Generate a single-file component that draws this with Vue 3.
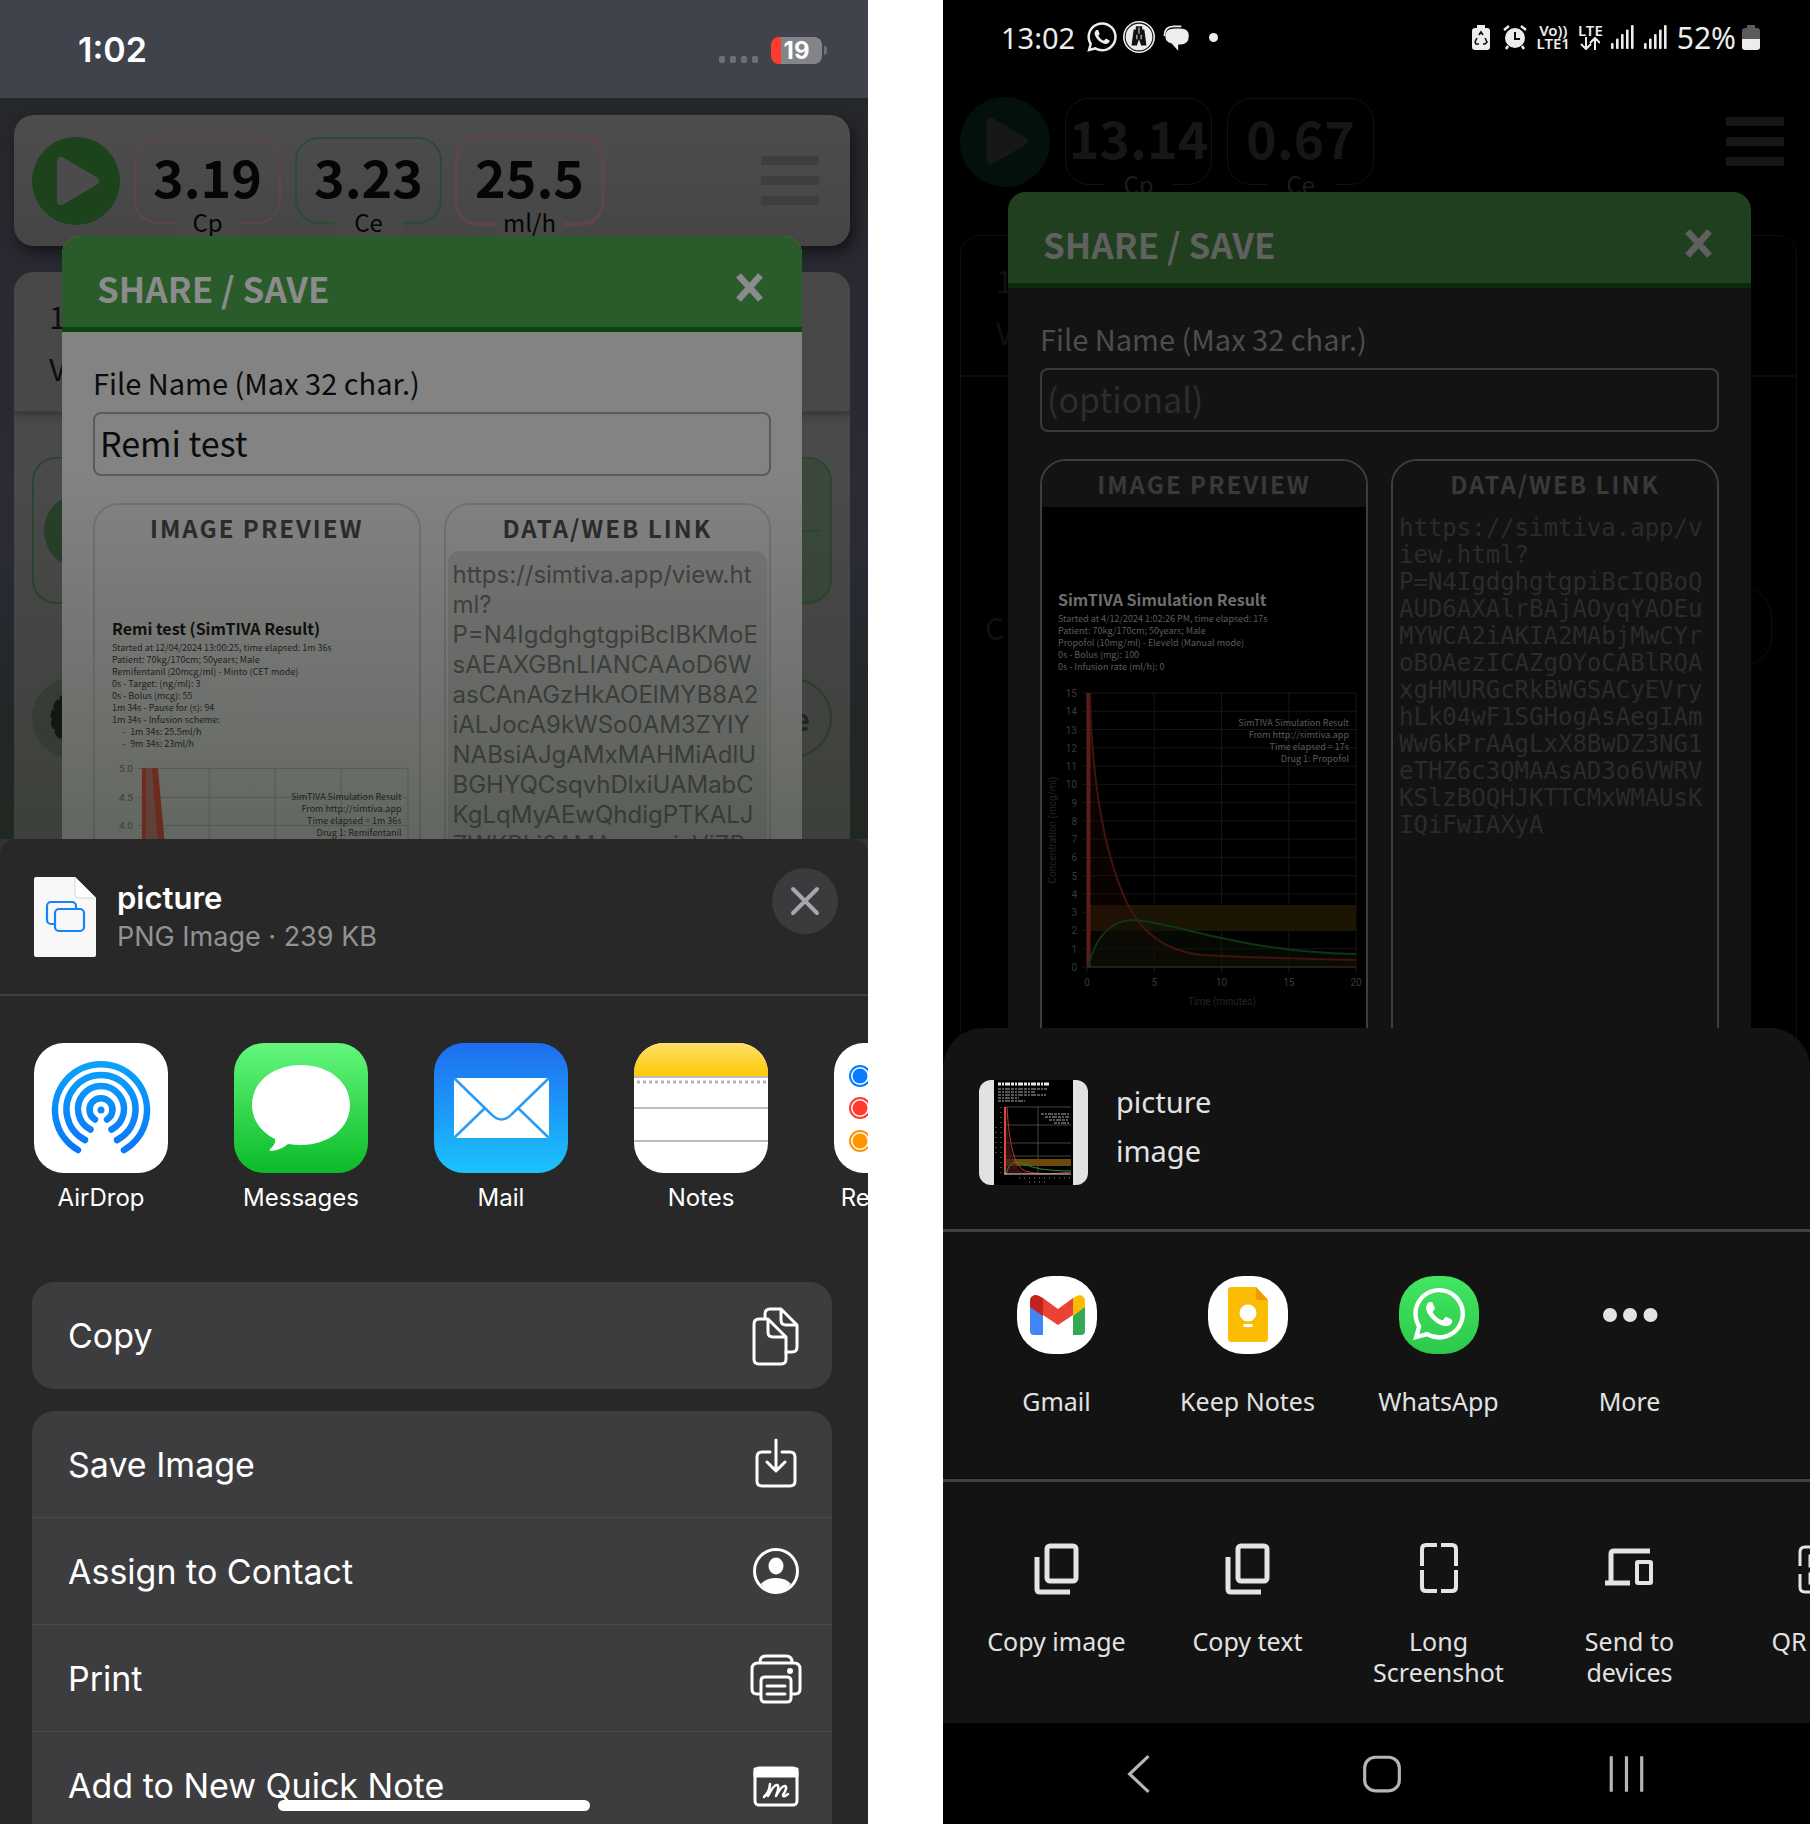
<script setup>
const readouts = {
  ios: [
    { value: '3.19', unit: 'Cp', tone: 'red' },
    { value: '3.23', unit: 'Ce', tone: 'green' },
    { value: '25.5', unit: 'ml/h', tone: 'rate' }
  ],
  android: [
    { value: '13.14', unit: 'Cp', tone: 'red' },
    { value: '0.67', unit: 'Ce', tone: 'green' }
  ]
}

const iosLink = [
  'https://simtiva.app/view.ht', 'ml?', 'P=N4IgdghgtgpiBcIBKMoE', 'sAEAXGBnLIANCAAoD6W',
  'asCAnAGzHkAOElMYB8A2', 'iALJocA9kWSo0AM3ZYIY', 'NABsiAJgAMxMAHMiAdlU',
  'BGHYQCsqvhDlxiUAMabC', 'KgLqMyAEwQhdigPTKALJ', 'ZWKRLi8AMAnmsaixViZR'
].join('\n')

const androidLink = [
  'https://simtiva.app/v', 'iew.html?', 'P=N4IgdghgtgpiBcIQBoQ', 'AUD6AXAlrBAjAOyqYAOEu',
  'MYWCA2iAKIA2MAbjMwCYr', 'oBOAezICAZgOYoCABlRQA', 'xgHMURGcRkBWGSACyEVry',
  'hLk04wF1SGHogAsAegIAm', 'Ww6kPrAAgLxX8BwDZ3NG1', 'eTHZ6c3QMAAsAD3o6VWRV',
  'KSlzBOQHJKTTCMxWMAUsK', 'IQiFwIAXyA'
].join('\n')

const iosLines = [
  'Started at 12/04/2024 13:00:25, time elapsed: 1m 36s',
  'Patient: 70kg/170cm; 50years; Male',
  'Remifentanil (20mcg/ml) - Minto (CET mode)',
  '0s - Target: (ng/ml): 3',
  '0s - Bolus (mcg): 55',
  '1m 34s - Pause for (s): 94',
  '1m 34s - Infusion scheme:'
]
const iosScheme = ['1m 34s: 25.5ml/h', '9m 34s: 23ml/h']
const iosLegend = ['SimTIVA Simulation Result', 'From http://simtiva.app', 'Time elapsed = 1m 36s', 'Drug 1: Remifentanil']

const androidLines = [
  'Started at 4/12/2024 1:02:26 PM, time elapsed: 17s',
  'Patient: 70kg/170cm; 50years; Male',
  'Propofol (10mg/ml) - Eleveld (Manual mode)',
  '0s - Bolus (mg): 100',
  '0s - Infusion rate (ml/h): 0'
]
const androidLegend = ['SimTIVA Simulation Result', 'From http://simtiva.app', 'Time elapsed = 17s', 'Drug 1: Propofol']

const units = Array.from({ length: 16 }, (_, i) => i)
const unitY = (v) => 284 - (v * 274) / 15
const minuteX = (m) => 45 + (m * 269) / 20

const bars = [0, 1, 2, 3, 4]

const whatsapp = 'M17.472 14.382c-.297-.149-1.758-.867-2.030-.967-.273-.099-.471-.148-.67.15-.197.297-.767.966-.94 1.164-.173.199-.347.223-.644.075-.297-.15-1.255-.463-2.390-1.475-.883-.788-1.480-1.761-1.653-2.059-.173-.297-.018-.458.13-.606.134-.133.298-.347.446-.52.149-.174.198-.298.298-.497.099-.198.05-.371-.025-.52-.075-.149-.669-1.612-.916-2.207-.242-.579-.487-.5-.669-.51-.173-.008-.371-.01-.57-.01-.198 0-.52.074-.792.372-.272.297-1.040 1.016-1.040 2.479 0 1.462 1.065 2.875 1.213 3.074.149.198 2.096 3.200 5.077 4.487.709.306 1.262.489 1.694.625.712.227 1.360.195 1.871.118.571-.085 1.758-.719 2.006-1.413.248-.694.248-1.289.173-1.413-.074-.124-.272-.198-.57-.347m-5.421 7.403h-.004a9.870 9.870 0 01-5.031-1.378l-.361-.214-3.741.982.998-3.648-.235-.374a9.860 9.860 0 01-1.510-5.260c.001-5.450 4.436-9.884 9.888-9.884 2.640 0 5.122 1.030 6.988 2.898a9.825 9.825 0 012.893 6.994c-.003 5.450-4.437 9.884-9.885 9.884m8.413-18.297A11.815 11.815 0 0012.050 0C5.495 0 .16 5.335.157 11.892c0 2.096.547 4.142 1.588 5.945L.057 24l6.305-1.654a11.882 11.882 0 005.683 1.448h.005c6.554 0 11.890-5.335 11.893-11.893a11.821 11.821 0 00-3.480-8.413Z'
</script>

<template>
  <main class="stage">
    <section class="phone ios">
      <header class="ios-status">
        <time>1:02</time>
        <span class="dots"><i v-for="n in 4" :key="n"></i></span>
        <span class="battery">19</span>
      </header>

      <div class="app">
        <div class="topbar">
          <button class="play" aria-label="Play">
            <svg viewBox="0 0 88 88"><path d="M29 24v40l34-20z" stroke-width="8" stroke-linejoin="round" /></svg>
          </button>
          <div v-for="r in readouts.ios" :key="r.unit" class="readout" :class="r.tone">
            <b>{{ r.value }}</b><span>{{ r.unit }}</span>
          </div>
          <button class="menu" aria-label="Menu"><i></i><i></i><i></i></button>
        </div>
        <div class="card">
          <div class="card-head"><p>1</p><p>V</p></div>
          <div class="drug"><i class="knob"></i><i class="tick"></i></div>
          <div class="tools">
            <span class="gear">
              <svg viewBox="0 0 80 80"><circle cx="48" cy="40" r="28" stroke-dasharray="8 3" stroke-width="3" /></svg>
            </span>
            <span class="pill">e</span>
          </div>
        </div>

        <div class="modal">
          <header>
            <h2>SHARE / SAVE</h2>
            <button aria-label="Close dialog"><svg viewBox="0 0 30 30"><path d="M5 4l20 22M25 4L5 26" /></svg></button>
          </header>
          <div class="body">
            <label for="name-ios">File Name (Max 32 char.)</label>
            <input id="name-ios" type="text" maxlength="32" value="Remi test">
            <div class="panels">
              <section class="panel">
                <h3>IMAGE PREVIEW</h3>
                <div class="result">
                  <h4>Remi test (SimTIVA Result)</h4>
                  <p v-for="l in iosLines" :key="l">{{ l }}</p>
                  <p v-for="l in iosScheme" :key="l" class="sub"><span>-</span>{{ l }}</p>
                </div>
                <svg class="chart" viewBox="0 0 324 120">
                  <g stroke="#6a6d69" stroke-width="1">
                    <path d="M42 10.500H313M42 39.500H313M42 67.500H313M42 96.500H313M114.500 10V120M180.500 10V120M246.500 10V120M313.500 10V120" />
                  </g>
                  <path d="M47 10H60L70 120H47z" fill="#7c4b45" />
                  <path d="M47 10H51V120H47zM57 10H63L73 120H66z" fill="#8c2c22" />
                  <g class="ticks" text-anchor="end">
                    <text x="38" y="14">5.0</text><text x="38" y="43">4.5</text><text x="38" y="71">4.0</text>
                  </g>
                  <g class="legend" text-anchor="end">
                    <text v-for="(l, i) in iosLegend" :key="l" x="307" :y="42 + i * 12">{{ l }}</text>
                  </g>
                </svg>
              </section>
              <section class="panel">
                <h3><label for="link-ios">DATA/WEB LINK</label></h3>
                <textarea id="link-ios" readonly :value="iosLink"></textarea>
              </section>
            </div>
          </div>
        </div>
        <div class="shade"></div>
      </div>

      <div class="ios-sheet">
        <header class="file">
          <svg class="doc" viewBox="0 0 62 80">
            <path d="M0 2Q0 0 2 0H41L62 21V78Q62 80 60 80H2Q0 80 0 78z" fill="#f8f8f8" />
            <path d="M41 0V17Q41 21 45 21H62z" fill="#fff" stroke="#d5d5d5" />
            <g fill="#f8f8f8" stroke="#1583fa" stroke-width="2.200">
              <rect x="13" y="25" width="29" height="22" rx="4" /><rect x="21" y="32" width="29" height="22" rx="4" />
            </g>
          </svg>
          <div class="file-text"><strong>picture</strong><span>PNG Image · 239 KB</span></div>
          <button class="close" aria-label="Close"><svg viewBox="0 0 66 66"><path d="M21 21l24 24M45 21L21 45" /></svg></button>
        </header>

        <div class="targets">
          <button>
            <svg viewBox="0 0 134 130" class="white">
              <defs>
                <linearGradient id="air" gradientUnits="userSpaceOnUse" x1="0" y1="20" x2="0" y2="110"><stop stop-color="#0aa2fb" /><stop offset="1" stop-color="#0a75f8" /></linearGradient>
              </defs>
              <g fill="none" stroke="url(#air)" stroke-width="6.500" stroke-linecap="round">
                <path d="M44 107A46 46 0 1 1 90 107M51 97A34.500 34.500 0 1 1 83 97M56.500 86.500A23 23 0 1 1 77.500 86.500M61 76.500A11.500 11.500 0 1 1 73 76.500" />
              </g>
              <circle cx="67" cy="67" r="3.500" fill="#0a88f8" />
            </svg>
            AirDrop
          </button>
          <button>
            <svg viewBox="0 0 134 130" class="messages">
              <path fill="#fff" d="M67 22c28 0 49 17 49 40s-21 40-49 40q-7 0-13-1-7 6-17 7-2 0-1-2 6-5 5-10C27 89 18 77 18 62c0-23 21-40 49-40z" />
            </svg>
            Messages
          </button>
          <button>
            <svg viewBox="0 0 134 130" class="mail">
              <rect x="20" y="35" width="95" height="60" rx="4" fill="#fff" />
              <g fill="none" stroke="#2b9cf5" stroke-width="2.500"><path d="M21 36L57 71Q67.500 82 78 71L114 36M21 94L51 65M114 94L84 65" /></g>
            </svg>
            Mail
          </button>
          <button>
            <svg viewBox="0 0 134 130">
              <defs><linearGradient id="note" x2="0" y2="1"><stop stop-color="#ffe068" /><stop offset="1" stop-color="#fcca05" /></linearGradient></defs>
              <path fill="#fff" d="M0 0H134V130H0z" /><path fill="url(#note)" d="M0 0H134V33H0z" />
              <path d="M0 34H134M0 65H134M0 98H134" stroke="#bdbdbd" stroke-width="2" />
              <path d="M3 39H134" stroke="#b5b5b5" stroke-width="3" stroke-dasharray="3 3" />
            </svg>
            Notes
          </button>
          <button>
            <svg viewBox="0 0 134 130" class="white">
              <g fill="none" stroke-width="2"><circle cx="26" cy="33" r="10" stroke="#0a7bff" /><circle cx="26" cy="65" r="10" stroke="#ff3b30" /><circle cx="26" cy="98" r="10" stroke="#ff9500" /></g>
              <circle cx="26" cy="33" r="7.500" fill="#0a7bff" /><circle cx="26" cy="65" r="7.500" fill="#ff3b30" /><circle cx="26" cy="98" r="7.500" fill="#ff9500" />
            </svg>
            Reminders
          </button>
        </div>

        <div class="actions">
          <button>Copy
            <svg viewBox="0 0 56 60">
              <path d="M17 12V8q0-5 5-5h11l16 16v22q0 5-5 5h-6M33 3v11q0 5 5 5h11" />
              <path d="M6 18q0-5 5-5h9l18 18v22q0 5-5 5H11q-5 0-5-5zM20 13v13q0 5 5 5h13" />
            </svg>
          </button>
        </div>
        <div class="actions long">
          <button>Save Image
            <svg viewBox="0 0 56 60"><path d="M22 18h-8q-5 0-5 5v24q0 5 5 5h28q5 0 5-5V23q0-5-5-5h-8M28 6v31M19 28l9 9 9-9" /></svg>
          </button>
          <button>Assign to Contact
            <svg viewBox="0 0 56 60"><circle cx="28" cy="30" r="21.500" /><ellipse cx="28" cy="25" rx="7.500" ry="8.500" fill="#fff" stroke="none" /><path d="M13 43q5-6 15-6t15 6q-6 8-15 8t-15-8z" fill="#fff" stroke="none" /></svg>
          </button>
          <button>Print
            <svg viewBox="0 0 56 60"><path d="M12 14q0-6 6-6h20q6 0 6 6M12 46H9q-5 0-5-5V21q0-6 6-6h36q6 0 6 6v20q0 5-5 5h-3M13 33q0-4 4-4h22q4 0 4 4v17q0 4-4 4H17q-4 0-4-4zM19 38h18M19 46h18" /><circle cx="42" cy="23" r="2" fill="#fff" stroke-width="2" /></svg>
          </button>
          <button>Add to New Quick Note
            <svg viewBox="0 0 56 60"><rect x="7" y="12" width="42" height="37" rx="4" /><path d="M7 13h42v7H7z" fill="#fff" /><path d="M16 41q6-6 6-13l-2 12q6-12 9-11t-1 11q6-11 9-10t-2 9q0 3 5-1" stroke-width="2.500" /></svg>
          </button>
        </div>
        <i class="home-bar"></i>
      </div>
    </section>

    <section class="phone android">
      <header class="and-status">
        <time>13:02</time>
        <svg class="w30" viewBox="-1 -1 26 26"><path fill="#ededed" :d="whatsapp" /></svg>
        <svg class="w30" viewBox="0 0 30 30"><circle cx="15" cy="15" r="15" fill="#ededed" /><circle cx="15" cy="15" r="13" fill="none" stroke="#111" /><path fill="#111" d="M12 5h6v3h2l2 15h-5l-2-6-2 6H8l2-15h2z" /><path d="M13 13v4M17 13v4M15 6v6" stroke="#ddd" /></svg>
        <svg class="w30" viewBox="0 0 30 30"><path d="M4 14q0-9 9-9h7" fill="none" stroke="#ededed" stroke-width="1.500" /><path fill="#ededed" d="M14 7h5q8 0 8 7 0 8-8 8h-2v6l-6-7q-6-1-6-7 0-7 9-7z" /></svg>
        <i class="dot"></i>
        <span class="grow"></span>
        <svg class="w18" viewBox="0 0 18 25"><path fill="#ededed" d="M5 0h8v3h2q3 0 3 3v16q0 3-3 3H3q-3 0-3-3V6q0-3 3-3h2z" /><path d="M7 10l2-3 2 3M13 13l2 4-2 2h-2M7 19H4l-1-2 2-4" fill="none" stroke="#111" stroke-width="1.600" /></svg>
        <svg class="w24" viewBox="0 0 24 26"><circle cx="12" cy="14" r="10" fill="#ededed" /><path d="M1 6l5-4M23 6l-5-4M5 22l-2 3M19 22l2 3" stroke="#ededed" stroke-width="2.500" /><path d="M12 8v7h5" fill="none" stroke="#111" stroke-width="2" /></svg>
        <span class="net"><span>Vo))</span><span>LTE1</span></span>
        <span class="net"><span>LTE</span>
          <svg viewBox="0 0 20 13"><path d="M6 0v11M1 7l5 5 5-5M15 13V2M10 6l5-5 5 5" fill="none" stroke="#ededed" stroke-width="2" /></svg>
        </span>
        <svg v-for="s in 2" :key="s" class="signal" viewBox="0 0 23 24"><rect v-for="b in bars" :key="b" :x="b * 5" :y="18 - b * 4.500" width="2.600" :height="6 + b * 4.500" rx="1" fill="#ededed" /></svg>
        <span class="percent">52%</span>
        <svg class="w18" viewBox="0 0 18 25"><path fill="#5b5b5b" d="M5 0h8v3h2q3 0 3 3v9H0V6q0-3 3-3h2z" /><path fill="#ededed" d="M0 14h18v8q0 3-3 3H3q-3 0-3-3z" /></svg>
      </header>

      <div class="app">
        <div class="topbar">
          <button class="play" aria-label="Play">
            <svg viewBox="0 0 88 88"><path d="M30 24v38l32-19z" stroke-width="8" stroke-linejoin="round" /></svg>
          </button>
          <div v-for="r in readouts.android" :key="r.unit" class="readout" :class="r.tone">
            <b>{{ r.value }}</b><span>{{ r.unit }}</span>
          </div>
          <button class="menu" aria-label="Menu"><i></i><i></i><i></i></button>
        </div>
        <div class="card">
          <div class="card-head"><p>1</p><p>V</p></div>
          <div class="faint"><span>C</span><i></i></div>
        </div>

        <div class="modal">
          <header>
            <h2>SHARE / SAVE</h2>
            <button aria-label="Close dialog"><svg viewBox="0 0 30 30"><path d="M5 4l20 22M25 4L5 26" /></svg></button>
          </header>
          <div class="body">
            <label for="name-android">File Name (Max 32 char.)</label>
            <input id="name-android" type="text" maxlength="32" placeholder="(optional)">
            <div class="panels">
              <section class="panel preview">
                <h3>IMAGE PREVIEW</h3>
                <div class="result">
                  <h4>SimTIVA Simulation Result</h4>
                  <p v-for="l in androidLines" :key="l">{{ l }}</p>
                </div>
                <svg class="chart" viewBox="0 0 324 350">
                  <g stroke="#161616" stroke-width="1">
                    <line v-for="u in units" :key="u" x1="40" x2="314" :y1="unitY(u)" :y2="unitY(u)" />
                    <line v-for="m in [0, 5, 10, 15, 20]" :key="m" y1="10" y2="290" :x1="minuteX(m)" :x2="minuteX(m)" />
                  </g>
                  <path d="M45 222H314V248H45z" fill="#1d1503" />
                  <path d="M48 10C52 110 64 175 81 211S125 268 159 272L314 277V284H45V10z" fill="#2a0806" opacity=".25" />
                  <path d="M46 284C53 255 68 238 90 237C130 238 190 268 314 271V284z" fill="#0b1206" opacity=".5" />
                  <path d="M46.500 284V10" stroke="#5c1d19" stroke-width="4" />
                  <path d="M48 10C50 110 64 170 81 211S125 268 159 272Q220 275 314 277" fill="none" stroke="#42130f" stroke-width="2" />
                  <path d="M46 284C53 255 68 238 90 237C130 238 190 268 314 271" fill="none" stroke="#0d3619" stroke-width="2" />
                  <path d="M45 284H314" stroke="#333" />
                  <g class="ticks" text-anchor="end">
                    <text v-for="u in units" :key="u" x="35" :y="unitY(u) + 4">{{ u }}</text>
                  </g>
                  <g class="ticks" text-anchor="middle">
                    <text v-for="m in [0, 5, 10, 15, 20]" :key="m" :x="minuteX(m)" y="303">{{ m }}</text>
                  </g>
                  <g class="axis" text-anchor="middle">
                    <text x="180" y="322">Time (minutes)</text>
                    <text transform="translate(14 147) rotate(-90)">Concentration (mcg/ml)</text>
                  </g>
                  <g class="legend" text-anchor="end">
                    <text v-for="(l, i) in androidLegend" :key="l" x="307" :y="43 + i * 12">{{ l }}</text>
                  </g>
                </svg>
              </section>
              <section class="panel">
                <h3><label for="link-android">DATA/WEB LINK</label></h3>
                <textarea id="link-android" readonly :value="androidLink"></textarea>
              </section>
            </div>
          </div>
        </div>
      </div>

      <div class="and-sheet">
        <header class="file">
          <svg class="thumb" viewBox="0 0 109 105">
            <path fill="#e2e2e2" d="M0 0H109V105H0z" /><path d="M15 0H94V105H15z" />
            <g stroke="#e8e8e8" stroke-dasharray="3 1 2 1 5 1"><path d="M19 4H71" stroke-width="3" /><path d="M19 9H68M19 12H56M19 15H67M19 18H40M19 21H46M62 34H90M66 37H90M70 40H90M75 43H90" stroke-width="1.200" opacity=".75" /></g>
            <path d="M26 27H92M26 45H92M26 63H92M26 76H92M59 27V94" stroke="#555" stroke-width=".8" />
            <path d="M26 79H92V86H26z" fill="#6c4a0b" />
            <path d="M27 27Q30 95 48 92L92 94H26z" fill="#461713" opacity=".7" />
            <path d="M27 94Q31 77 45 84T92 91" fill="none" stroke="#1d8d41" />
            <path d="M28 27Q31 86 46 91T92 92" fill="none" stroke="#b33a30" />
            <path d="M26 27V94" stroke="#d64c40" stroke-width="2" /><path d="M25 94H92" stroke="#ddd" />
            <path d="M22 27V94M17 47V75M40 98H93M50 102H67" stroke="#888" stroke-width="1" stroke-dasharray="1 4" />
          </svg>
          <div class="file-text"><span>picture</span><span>image</span></div>
        </header>
        <div class="row apps">
          <button>
            <svg class="tile white" viewBox="0 0 80 78">
              <path d="M13 30l13 9v20H17q-4 0-4-4z" fill="#4285f4" /><path d="M56 39l12-9v25q0 4-4 4h-8z" fill="#34a853" />
              <path d="M13 31v-6c0-6 6-8 11-4l2 1v18z" fill="#c5221f" /><path d="M26 22l15 11 15-11v17L41 49 26 39z" fill="#ea4335" /><path d="M56 22l2-1c5-4 10-1 10 4v6l-12 9z" fill="#fbbc04" />
            </svg>Gmail
          </button>
          <button>
            <svg class="tile white" viewBox="0 0 80 78">
              <path d="M20 14q0-3 3-3h25l12 13v39q0 3-3 3H23q-3 0-3-3z" fill="#fbbc04" /><path d="M48 11v10q0 3 3 3h9z" fill="#f29900" />
              <circle cx="40" cy="37" r="8.500" fill="#fff" /><path d="M36 42h8v3h-8zM35.500 48h9v3h-9z" fill="#fff" />
            </svg>Keep Notes
          </button>
          <button>
            <svg class="tile wa" viewBox="0 0 80 78"><path transform="translate(14 12) scale(2.170)" fill="#fff" :d="whatsapp" /></svg>WhatsApp
          </button>
          <button>
            <svg class="tile" viewBox="0 0 80 78"><g fill="#e4e4e4"><circle cx="20" cy="39" r="7" /><circle cx="40" cy="39" r="7" /><circle cx="60.500" cy="39" r="7" /></g></svg>More
          </button>
        </div>
        <div class="row tools">
          <button v-for="label in ['Copy image', 'Copy text']" :key="label">
            <svg viewBox="0 0 60 60"><rect x="20" y="8" width="29" height="35" rx="3" stroke-width="5" /><path d="M10 19v32q0 3 3 3h30" stroke-width="5" /></svg>{{ label }}
          </button>
          <button>
            <svg viewBox="0 0 60 60"><path d="M28 7H17q-4 0-4 4v17M32 7h11q4 0 4 4v17M28 53H17q-4 0-4-4V32M32 53h11q4 0 4-4V32" stroke-width="4" /></svg>Long<br>Screenshot
          </button>
          <button>
            <svg viewBox="0 0 60 60"><path d="M50 13H14q-3 0-3 3v30M5 45h25" stroke-width="5" /><rect x="37" y="24" width="14" height="21" rx="1" stroke-width="4" /></svg>Send to<br>devices
          </button>
          <button>
            <svg viewBox="0 0 60 60"><path d="M20 9h-6q-5 0-5 5v14M9 36v13q0 5 5 5h6M28 18h-9v10h9zM28 36h-9v9h9z" stroke-width="3" /></svg>QR code
          </button>
        </div>
      </div>
      <nav class="navbar">
        <button aria-label="Back"><svg viewBox="0 0 40 40"><path d="M30 3L12 20l18 17" /></svg></button>
        <button aria-label="Home"><svg viewBox="0 0 40 40"><rect x="3.500" y="4" width="33" height="32" rx="10" /></svg></button>
        <button aria-label="Recents"><svg viewBox="0 0 40 40"><path d="M5 3v34M19.500 3v34M34 3v34" /></svg></button>
      </nav>
    </section>
  </main>
</template>

<style>
body { background: #fff; }
</style>

<style scoped>
* { box-sizing: border-box; margin: 0; padding: 0; }
button { border: 0; background: none; color: inherit; font: inherit; flex: none; }
svg { display: block; flex: none; }
.white { background: #fff; }
.stage { display: grid; grid-template-columns: minmax(0, 868fr) minmax(0, 867fr); column-gap: 75px; height: 100vh; }
.phone { display: flex; flex-direction: column; overflow: hidden; min-width: 0; }

/* palettes */
.ios {
  --face: #4b4b4b; --number: #050505; --bar: #3e3e3e; --play: #1c431c; --play-icon: #4b4b4b;
  --red: #5d4648; --green: #2d4a33; --head: #295c2a; --head-line: #0f4312; --head-text: #8b8b8b;
  --body: #838383; --text: #0b0b0b; --field: #5a5a5a; --panel: #727272; --panel-title: #2b2b2b;
  --result-title: #0c0c0c; --result: #1d1d1d; --tick: #444;
  font-family: Inter, sans-serif; background: #31342f; color: #fff;
}
.android {
  --face: #000; --number: #161616; --bar: #161616; --play: #03100c; --play-icon: #171717;
  --red: #121212; --green: #121212; --head: #1f3f1e; --head-line: #0c2a0c; --head-text: #606060;
  --body: #131313; --text: #4d4d4d; --field: #3a3a3a; --panel: #3e3e3e; --panel-title: #393939;
  --result-title: #6e6e6e; --result: #5c5c5c; --tick: #3a3a3a;
  font-family: "Noto Sans", sans-serif; background: #000; color: #e2e2e2;
}

/* iOS status bar */
.ios-status { flex: none; height: 98px; background: #40424c; display: flex; align-items: center; padding: 2px 46px 0 78px; }
.ios-status time { font-size: 34px; font-weight: 600; margin-right: auto; line-height: 96px; }
.dots { display: flex; gap: 5px; padding-top: 18px; margin-right: 13px; }
.dots i { width: 6px; height: 7px; border-radius: 2px; background: #6d6f78; }
.battery { position: relative; width: 51px; height: 27px; border-radius: 8px; background: linear-gradient(90deg, #ff3b30 10px, #84858b 10px); font-size: 24px; font-weight: 700; line-height: 27px; text-align: center; }
.battery::after { content: ""; position: absolute; left: 53px; top: 9px; width: 3px; height: 9px; border-radius: 0 3px 3px 0; background: #6d6f78; }

/* simulator screen behind the sheets */
.app { flex: 1; position: relative; min-height: 0; overflow: hidden; font-family: "Noto Sans CJK SC", sans-serif; }
.ios .app { flex: 741 1 0; padding: 0 18px 0 14px; background: linear-gradient(#26272b, #2a2a36 45%, #2b2b38 60%, #23272d 80%, #222728); }
.topbar { display: flex; align-items: center; gap: 14px; height: 131px; padding: 0 31px 0 18px; border-radius: 20px; background: var(--face); }
.ios .topbar { margin-top: 17px; box-shadow: 4px 6px 12px #15161a; background: linear-gradient(#4d4d4d, #454545); }
.play svg { width: 88px; height: 88px; border-radius: 50%; background: var(--play); }
.play path { fill: var(--play-icon); stroke: var(--play-icon); }
.readout { position: relative; flex: none; width: 147px; height: 87px; padding-bottom: 9px; border: 2px solid var(--red); border-radius: 24px; display: flex; align-items: center; justify-content: center; color: var(--number); }
.readout.green { border-color: var(--green); }
.readout.rate { width: 151px; height: 91px; border-width: 4px; margin-left: -2px; }
.readout b { font-size: 52px; line-height: 60px; }
.readout span { position: absolute; bottom: -16px; width: 68px; text-align: center; font-size: 24px; line-height: 32px; background: #484848; }
.android .readout span { background: #000; color: #1c1c1c; }
.menu { margin-left: auto; display: grid; gap: 11px; width: 58px; }
.menu i { height: 9px; background: var(--bar); }
.card { margin-top: 26px; height: 600px; border-radius: 20px; background: #4a4a4a; overflow: hidden; color: #0c0c0c; font-size: 30px; }
.card-head { height: 141px; padding: 18px 35px; border-bottom: 2px solid #3c3c3c; background: #484848; box-shadow: 0 2px 8px #333; }
.card-head p { line-height: 52px; }
.drug { display: flex; align-items: center; justify-content: space-between; height: 147px; margin: 44px 18px 0; border: 2px solid #2a4630; border-radius: 24px; background: linear-gradient(90deg, #4a4a4a 80%, #3b493b 80%); }
.knob { width: 76px; height: 76px; margin-left: 10px; border-radius: 50%; background: #274029; }
.tick { width: 30px; height: 2px; margin-right: 10px; background: #2a4630; }
.tools { display: flex; justify-content: space-between; }
.card .tools { padding: 74px 18px 0; }
.gear svg { width: 80px; height: 80px; border-radius: 50%; background: #3e403e; }
.gear circle { fill: #101010; stroke: #101010; }
.pill { width: 110px; height: 80px; border: 2px solid #393b39; border-radius: 40px; line-height: 76px; padding-right: 20px; text-align: right; font-weight: 700; color: #222; }
.shade { position: absolute; inset: 50% 0 0; background: linear-gradient(rgba(30, 42, 24, 0), rgba(30, 42, 24, .32)); pointer-events: none; }

/* share dialog */
.modal { position: absolute; top: 138px; left: 62px; right: 66px; border-radius: 18px 18px 0 0; background: var(--body); overflow: hidden; }
.modal header { display: flex; align-items: center; justify-content: space-between; height: 96px; padding: 12px 36px 0 35px; background: var(--head); border-bottom: 5px solid var(--head-line); color: var(--head-text); }
.modal h2 { font-size: 35px; line-height: 48px; }
.modal header svg { width: 33px; height: 33px; }
.modal header path { fill: none; stroke: var(--head-text); stroke-width: 6; }
.body { padding: 28px 31px 0; color: var(--text); }
.body > label { display: block; font-size: 29px; line-height: 44px; margin-bottom: 8px; }
input { display: block; width: 100%; height: 64px; padding: 0 5px 3px; border: 2px solid var(--field); border-radius: 8px; background: transparent; color: inherit; font: 34px "Noto Sans CJK SC", sans-serif; }
input::placeholder { color: #2d2d2d; opacity: 1; }
.panels { display: grid; grid-template-columns: minmax(0, 1fr) minmax(0, 1fr); gap: 23px; margin-top: 27px; }
.panel { height: 640px; border: 2px solid var(--panel); border-radius: 26px; overflow: hidden; display: flex; flex-direction: column; }
.preview { background: #000; }
h3 { flex: none; font-size: 24px; line-height: 46px; height: 46px; letter-spacing: 2px; text-align: center; color: var(--panel-title); background: var(--body); }
.result { padding: 65px 0 8px 17px; color: var(--result); font-size: 9px; line-height: 12px; white-space: nowrap; }
.android .result { padding: 80px 0 10px 16px; }
h4 { font-size: 16px; line-height: 24px; margin-bottom: 2px; color: var(--result-title); }
.sub { padding-left: 10px; }
.sub span { margin-right: 5px; }
.chart { width: 100%; }
.ticks { font: 10px Roboto, sans-serif; fill: var(--tick); }
.axis { font: 10px Roboto, sans-serif; fill: #252525; }
.legend { font-size: 9px; fill: var(--result); }
textarea { flex: 1; margin: 0 2px; padding: 9px 5px; border: 0; resize: none; overflow: hidden; white-space: pre; background: #777; border-radius: 12px 12px 0 0; color: #424242; font: 24px/30px Inter, sans-serif; }
.android textarea { background: transparent; color: #2b2b2b; padding: 8px 4px; font: 24px/27px "DejaVu Sans Mono", monospace; }

/* iOS share sheet */
.ios-sheet { flex: 985 1 0; min-height: 0; position: relative; overflow: hidden; background: #282828; border-radius: 16px 16px 0 0; }
.ios .file { display: flex; height: 157px; padding: 29px 30px 0 34px; border-bottom: 2px solid #404040; }
.doc { width: 62px; height: 80px; margin-top: 9px; }
.file-text { display: flex; flex-direction: column; }
.ios .file-text { margin: 10px auto 0 21px; }
.ios strong { font-size: 31px; font-weight: 600; line-height: 40px; }
.ios .file-text span { font-size: 27px; line-height: 38px; color: #929292; }
.close { align-self: flex-start; }
.close svg { width: 66px; height: 66px; border-radius: 50%; background: #3b3b3d; }
.close path { stroke: #a8a8ac; stroke-width: 4; stroke-linecap: round; }
.targets { display: flex; gap: 66px; padding: 47px 0 0 34px; }
.targets button { width: 134px; display: flex; flex-direction: column; align-items: center; gap: 8px; font-size: 24px; line-height: 34px; }
.targets svg { width: 134px; height: 130px; border-radius: 30px; }
.messages { background: linear-gradient(#64f77c, #0abb27); }
.mail { background: linear-gradient(#1e6df0, #1bc3fc); }
.actions { margin: 67px 36px 0 32px; background: #3d3d3f; border-radius: 22px; overflow: hidden; }
.actions.long { margin-top: 22px; border-radius: 22px 22px 0 0; }
.actions button { display: flex; align-items: center; justify-content: space-between; width: 100%; height: 107px; padding: 0 28px 0 36px; font-size: 34px; border-bottom: 1px solid #4a4a4c; }
.actions button:last-child { border: 0; }
.actions svg { width: 56px; height: 60px; fill: none; stroke: #fff; stroke-width: 3; stroke-linecap: round; stroke-linejoin: round; }
.home-bar { position: absolute; bottom: 13px; left: 32%; width: 36%; height: 11px; border-radius: 6px; background: #fff; }

/* Android status bar */
.and-status { flex: none; display: flex; align-items: center; height: 74px; padding: 0 50px 0 58px; color: #ededed; font-size: 29px; }
.and-status time { margin-right: 11px; }
.w30 { width: 32px; height: 32px; margin-right: 5px; }
.dot { width: 9px; height: 9px; margin-left: 12px; border-radius: 50%; background: #ededed; }
.grow { flex: 1; }
.w18 { width: 18px; height: 25px; }
.w24 { width: 24px; height: 26px; margin: 0 10px 0 13px; }
.net { display: flex; flex-direction: column; align-items: center; font-size: 15px; font-weight: 600; line-height: 13px; margin-right: 8px; }
.net svg { width: 20px; height: 13px; }
.signal { width: 23px; height: 24px; margin-right: 10px; }
.percent { font-size: 30px; margin-right: 6px; }

/* Android screen */
.android .app { padding: 2px 13px 0 17px; }
.android .topbar { padding: 0 13px 0 0; gap: 15px; }
.android .play svg { width: 90px; height: 90px; }
.android .readout { border-width: 1px; }
.android .card { margin-top: 28px; height: 900px; border: 1px solid #101010; background: #000; color: #101010; }
.android .card-head { background: #000; border-color: #0b0b0b; box-shadow: none; }
.android .modal { top: 118px; left: 65px; right: 59px; }
.android .body { padding: 28px 32px 0; }
.faint { display: flex; justify-content: space-between; align-items: center; padding: 210px 24px 0; }
.faint i { width: 60px; height: 80px; border: 1px solid #0c120c; border-radius: 30px; }

/* Android share sheet */
.and-sheet { flex: none; position: relative; margin-top: -40px; background: #131313; border-radius: 40px 40px 0 0; }
.android .file { display: flex; gap: 28px; height: 204px; padding: 52px 36px 0; border-bottom: 3px solid #424242; }
.thumb { width: 109px; height: 105px; border-radius: 12px; }
.android .file-text { font-size: 29px; line-height: 49px; margin-top: -3px; }
.row { display: flex; padding-left: 18px; overflow: hidden; font-size: 25px; line-height: 31px; }
.row button { width: 191px; display: flex; flex-direction: column; align-items: center; text-align: center; }
.apps { height: 250px; padding-top: 44px; border-bottom: 3px solid #424242; }
.tile { width: 80px; height: 78px; border-radius: 35px; margin-bottom: 32px; }
.wa { background: linear-gradient(#42e661, #2dc84b); }
.row.tools { height: 241px; padding-top: 56px; justify-content: flex-start; }
.row.tools svg { width: 60px; height: 60px; margin-bottom: 28px; fill: none; stroke: #e4e4e4; }
.row.tools button { justify-content: flex-start; }
.navbar { flex: none; display: flex; justify-content: space-around; align-items: center; height: 101px; padding: 0 61px 0 73px; background: #000; }
.navbar svg { width: 42px; height: 42px; fill: none; stroke: #b5b5b5; stroke-width: 3; }
</style>
